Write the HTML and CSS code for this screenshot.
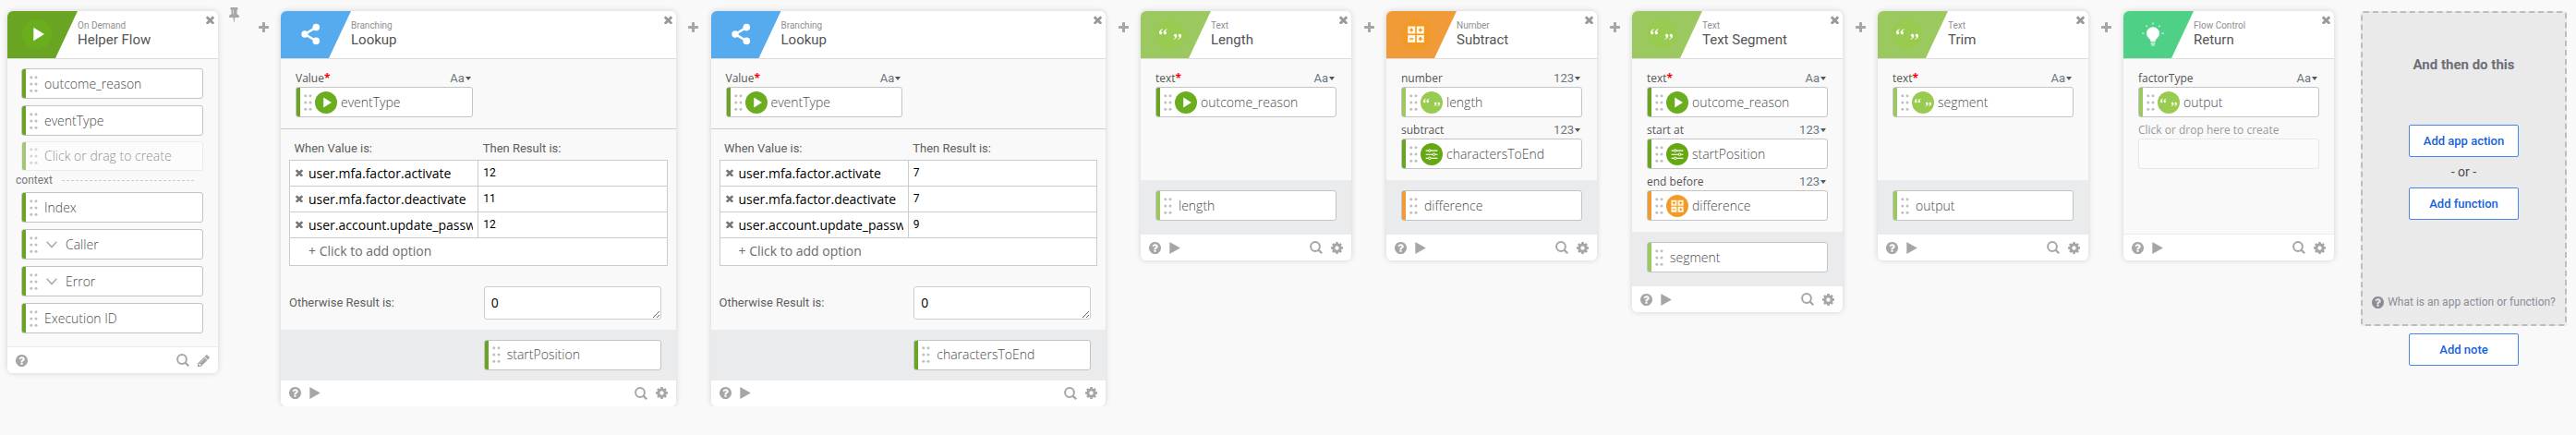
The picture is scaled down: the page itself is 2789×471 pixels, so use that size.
FILE: index.html
```html
<!DOCTYPE html>
<html lang="en">
<head>
<meta charset="utf-8">
<title>Helper Flow</title>
<link rel="stylesheet" href="styles.css">
</head>
<body>
<svg class="sprite" aria-hidden="true">
  <symbol id="i-close" viewBox="300 300 1192 1192"><path d="M1490 1322q0 40-28 68l-136 136q-28 28-68 28t-68-28l-294-294-294 294q-28 28-68 28t-68-28l-136-136q-28-28-28-68t28-68l294-294-294-294q-28-28-28-68t28-68l136-136q28-28 68-28t68 28l294 294 294-294q28-28 68-28t68 28l136 136q28 28 28 68t-28 68l-294 294 294 294q28 28 28 68z"/></symbol>
  <symbol id="i-plus" viewBox="192 128 1408 1408"><path d="M1600 736v192q0 40-28 68t-68 28h-416v416q0 40-28 68t-68 28h-192q-40 0-68-28t-28-68v-416h-416q-40 0-68-28t-28-68v-192q0-40 28-68t68-28h416v-416q0-40 28-68t68-28h192q40 0 68 28t28 68v416h416q40 0 68 28t28 68z"/></symbol>
  <symbol id="i-search" viewBox="0 0 14 14"><circle cx="6" cy="6" r="4.9" fill="none" stroke="currentColor" stroke-width="2"/><path d="M9.6 9.6 13.2 13.2" stroke="currentColor" stroke-width="2.2"/></symbol>
  <symbol id="i-help" viewBox="128 128 1536 1536"><path d="M1024 1376v-192q0-14-9-23t-23-9h-192q-14 0-23 9t-9 23v192q0 14 9 23t23 9h192q14 0 23-9t9-23zm256-672q0-88-55.500-163t-138.500-116-170-41q-243 0-371 213-15 24 8 42l132 100q7 6 19 6 16 0 25-12 53-68 86-92 34-24 86-24 48 0 85.500 26t37.500 59q0 38-20 61t-68 45q-63 28-115.500 86.500t-52.500 125.500v36q0 14 9 23t23 9h192q14 0 23-9t9-23q0-19 21.500-49.500t54.500-49.500q32-18 49-28.500t46-35 44.500-48 28-60.500 12.500-81zm384 192q0 209-103 385.500t-279.500 279.500-385.500 103-385.500-103-279.500-279.500-103-385.500 103-385.500 279.500-279.500 385.500-103 385.500 103 279.500 279.500 103 385.500z"/></symbol>
  <symbol id="i-gear" viewBox="128 128 1536 1536"><path d="M1152 896q0-106-75-181t-181-75-181 75-75 181 75 181 181 75 181-75 75-181zm512-109v222q0 12-8 23t-20 13l-185 28q-19 54-39 91 35 50 107 138 10 12 10 25t-9 23q-27 37-99 108t-94 71q-12 0-26-9l-138-108q-44 23-91 38-16 136-29 186-7 28-36 28h-222q-14 0-24.500-8.500t-11.500-21.500l-28-184q-49-16-90-37l-141 107q-10 9-25 9-14 0-25-11-126-114-165-168-7-10-7-23 0-12 8-23 15-21 51-66.500t54-70.500q-27-50-41-99l-183-27q-13-2-21-12.500t-8-23.500v-222q0-12 8-23t19-13l186-28q14-46 39-92-40-57-107-138-10-12-10-24 0-10 9-23 26-36 98.500-107.500t94.500-71.500q13 0 26 10l138 107q44-23 91-38 16-136 29-186 7-28 36-28h222q14 0 24.500 8.500t11.500 21.500l28 184q49 16 90 37l142-107q9-9 24-9 13 0 25 10 129 119 165 170 7 8 7 22 0 12-8 23-15 21-51 66.500t-54 70.500q26 50 41 98l183 28q13 2 21 12.500t8 23.500z"/></symbol>
  <symbol id="i-pencil" viewBox="128 128 1536 1536"><path d="M491 1536l91-91-235-235-91 91v107h128v128h107zm523-928q0-22-22-22-10 0-17 7l-542 542q-7 7-7 17 0 22 22 22 10 0 17-7l542-542q7-7 7-17zm-54-192l416 416-832 832h-416v-416zm683 96q0 53-37 90l-166 166-416-416 166-165q36-38 90-38 53 0 91 38l235 234q37 39 37 91z"/></symbol>
  <symbol id="i-pin" viewBox="320 128 1152 1664"><path d="M800 864v-448q0-14-9-23t-23-9-23 9-9 23v448q0 14 9 23t23 9 23-9 9-23zm672 352q0 26-19 45t-45 19h-429l-51 483q-2 12-10.500 20.500t-20.500 8.500h-1q-27 0-32-27l-76-485h-404q-26 0-45-19t-19-45q0-123 78.500-221.500t177.500-98.500v-512q-52 0-90-38t-38-90 38-90 90-38h640q52 0 90 38t38 90-38 90-90 38v512q99 0 177.500 98.500t78.500 221.500z"/></symbol>
  <symbol id="i-run" viewBox="0 0 12 13"><path d="M.3 0 11.800 6.500.3 13z"/></symbol>
  <symbol id="i-chevron" viewBox="0 0 12 8"><path d="M.7.8 6 6.600 11.300.8" fill="none" stroke="currentColor" stroke-width="1.500"/></symbol>
  <symbol id="i-caret" viewBox="0 0 6 4"><path d="M0 0h6L3 4z"/></symbol>
  <symbol id="i-grip" viewBox="0 0 9 18"><circle cx="1.800" cy="1.800" r="1.500"/><circle cx="7" cy="1.800" r="1.500"/><circle cx="1.800" cy="9" r="1.500"/><circle cx="7" cy="9" r="1.500"/><circle cx="1.800" cy="16.300" r="1.500"/><circle cx="7" cy="16.300" r="1.500"/></symbol>
  <symbol id="i-play" viewBox="0 0 32 32"><circle cx="16" cy="16" r="16" fill="#6aad1e"/><path d="M12.300 8.800 24 16 12.300 23.200z" fill="#fff"/></symbol>
  <symbol id="i-quotes" viewBox="0 0 32 32"><circle cx="16" cy="16" r="16" fill="#99cb51"/><g fill="#fff"><path id="q1" d="M7.600 10.200C5.200 11 4 12.500 4 14.200c0 1.200.7 2 1.700 2 .9 0 1.600-.6 1.600-1.500S6.700 13.200 5.800 13.100c.2-.9.900-1.600 2-2.200z"/><use href="#q1" x="4.700"/><use href="#q1" transform="rotate(180 16 16)"/><use href="#q1" transform="rotate(180 16 16)" x="4.700"/></g></symbol>
  <symbol id="i-calc" viewBox="0 0 32 32"><circle cx="16" cy="16" r="16" fill="#f39a26"/><g fill="#fff6e4"><path d="M7.200 7.500h8v8h-8zM16.800 7.500h8v8h-8zM7.200 17h8v8h-8zM16.800 17h8v8h-8z"/></g><path d="M11.200 9.500v4M9.200 11.500h4M20.800 9.500v4M18.800 11.500h4M9.200 21h4M20.800 19v4M18.800 21h4" stroke="#f39a26" stroke-width="1.600"/></symbol>
  <symbol id="i-sliders" viewBox="0 0 32 32"><circle cx="16" cy="16" r="16" fill="#65a812"/><path d="M7.500 10.800h17M7.500 16.300h17M7.500 21.800h17" stroke="#fff" stroke-width="1.500"/><g fill="#65a812" stroke="#fff" stroke-width="1.300"><circle cx="13" cy="10.800" r="1.700"/><circle cx="19.300" cy="16.300" r="1.700"/><circle cx="13" cy="21.800" r="1.700"/></g></symbol>
  <symbol id="i-share" viewBox="0 0 32 32"><g fill="#fff"><circle cx="10" cy="16" r="3.700"/><circle cx="22.300" cy="8.600" r="3.800"/><circle cx="22.300" cy="23.400" r="3.800"/></g><path d="M22.300 8.600 10 16l12.300 7.400" fill="none" stroke="#fff" stroke-width="2.400"/></symbol>
  <symbol id="i-bulb" viewBox="0 0 32 32"><path d="M16 8.200a7 7 0 0 0-7 7c0 2.600 1.500 4.100 3 5.500.9.900 1.400 1.900 1.400 3h5.200c0-1.100.5-2.100 1.400-3 1.500-1.400 3-2.900 3-5.500a7 7 0 0 0-7-7z" fill="#fff"/><path d="M13.600 24.900h4.800M13.600 26.600h4.800" stroke="#d8f5e4" stroke-width="1"/><path d="M14.300 28h3.400" stroke="#fff" stroke-width="1"/><path d="M16 3.300v2.400M8.300 6.500l1.700 1.800M23.700 6.500 22 8.300M4 15.200h2.600M25.400 15.200H28" stroke="#c6f1d8" stroke-width="1.300"/></symbol>
</svg>

<main class="flow">

  <article class="card">
    <header class="card-head">
      <div class="flag flag-green"><svg class="flag-icon"><use href="#i-play"/></svg></div>
      <div class="titles"><p class="kind">On Demand</p><h2 class="name">Helper Flow</h2></div>
      <button class="icon-btn close" aria-label="Remove Helper Flow"><svg class="ico-close"><use href="#i-close"/></svg></button>
    </header>
    <div class="body trigger">
      <div class="chip green"><svg class="grip"><use href="#i-grip"/></svg><span>outcome_reason</span></div>
      <div class="chip green"><svg class="grip"><use href="#i-grip"/></svg><span>eventType</span></div>
      <div class="chip green ghost"><svg class="grip"><use href="#i-grip"/></svg><span>Click or drag to create</span></div>
      <div class="divider-label"><span>context</span><i class="dashes"></i></div>
      <div class="chip green"><svg class="grip"><use href="#i-grip"/></svg><span>Index</span></div>
      <div class="chip green"><svg class="grip"><use href="#i-grip"/></svg><svg class="chevron"><use href="#i-chevron"/></svg><span>Caller</span></div>
      <div class="chip green"><svg class="grip"><use href="#i-grip"/></svg><svg class="chevron"><use href="#i-chevron"/></svg><span>Error</span></div>
      <div class="chip green"><svg class="grip"><use href="#i-grip"/></svg><span>Execution ID</span></div>
    </div>
    <footer class="card-foot">
      <button class="icon-btn" aria-label="Help"><svg class="ico"><use href="#i-help"/></svg></button>
      <button class="icon-btn push" aria-label="Search"><svg class="ico ico-search"><use href="#i-search"/></svg></button>
      <button class="icon-btn" aria-label="Edit"><svg class="ico"><use href="#i-pencil"/></svg></button>
    </footer>
  </article>

  <div class="joint joint-pin">
    <button class="icon-btn" aria-label="Pin"><svg class="ico-pin"><use href="#i-pin"/></svg></button>
    <button class="icon-btn add" aria-label="Add step"><svg class="ico-plus"><use href="#i-plus"/></svg></button>
  </div>

  <article class="card wide">
    <header class="card-head">
      <div class="flag flag-blue"><svg class="flag-icon"><use href="#i-share"/></svg></div>
      <div class="titles"><p class="kind">Branching</p><h2 class="name">Lookup</h2></div>
      <button class="icon-btn close" aria-label="Remove Lookup"><svg class="ico-close"><use href="#i-close"/></svg></button>
    </header>
    <div class="body lookup-in">
      <div class="field half">
        <div class="field-top"><span class="label">Value<b class="req">*</b></span><button class="type">Aa<svg class="caret"><use href="#i-caret"/></svg></button></div>
        <div class="chip green"><svg class="grip"><use href="#i-grip"/></svg><svg class="badge"><use href="#i-play"/></svg><span>eventType</span></div>
      </div>
    </div>
    <div class="lookup">
      <table class="cases">
        <thead><tr><th scope="col">When Value is:</th><th scope="col">Then Result is:</th></tr></thead>
        <tbody>
          <tr><td><div class="case"><button class="icon-btn" aria-label="Remove option"><svg class="ico-x"><use href="#i-close"/></svg></button><input class="when" aria-label="Value 1" value="user.mfa.factor.activate"></div></td><td><input class="then" aria-label="Result 1" value="12"></td></tr>
          <tr><td><div class="case"><button class="icon-btn" aria-label="Remove option"><svg class="ico-x"><use href="#i-close"/></svg></button><input class="when" aria-label="Value 2" value="user.mfa.factor.deactivate"></div></td><td><input class="then" aria-label="Result 2" value="11"></td></tr>
          <tr><td><div class="case"><button class="icon-btn" aria-label="Remove option"><svg class="ico-x"><use href="#i-close"/></svg></button><input class="when" aria-label="Value 3" value="user.account.update_password"></div></td><td><input class="then" aria-label="Result 3" value="12"></td></tr>
          <tr><td class="add-cell" colspan="2"><button class="add-option">+ Click to add option</button></td></tr>
        </tbody>
      </table>
      <div class="otherwise"><label for="else-1">Otherwise Result is:</label><textarea id="else-1">0</textarea></div>
    </div>
    <div class="out out-half">
      <div class="chip green"><svg class="grip"><use href="#i-grip"/></svg><span>startPosition</span></div>
    </div>
    <footer class="card-foot">
      <button class="icon-btn" aria-label="Help"><svg class="ico"><use href="#i-help"/></svg></button>
      <button class="icon-btn" aria-label="Run"><svg class="ico ico-run"><use href="#i-run"/></svg></button>
      <button class="icon-btn push" aria-label="Search"><svg class="ico ico-search"><use href="#i-search"/></svg></button>
      <button class="icon-btn" aria-label="Settings"><svg class="ico"><use href="#i-gear"/></svg></button>
    </footer>
  </article>

  <div class="joint"><button class="icon-btn add" aria-label="Add step"><svg class="ico-plus"><use href="#i-plus"/></svg></button></div>

  <article class="card wide">
    <header class="card-head">
      <div class="flag flag-blue"><svg class="flag-icon"><use href="#i-share"/></svg></div>
      <div class="titles"><p class="kind">Branching</p><h2 class="name">Lookup</h2></div>
      <button class="icon-btn close" aria-label="Remove Lookup"><svg class="ico-close"><use href="#i-close"/></svg></button>
    </header>
    <div class="body lookup-in">
      <div class="field half">
        <div class="field-top"><span class="label">Value<b class="req">*</b></span><button class="type">Aa<svg class="caret"><use href="#i-caret"/></svg></button></div>
        <div class="chip green"><svg class="grip"><use href="#i-grip"/></svg><svg class="badge"><use href="#i-play"/></svg><span>eventType</span></div>
      </div>
    </div>
    <div class="lookup">
      <table class="cases">
        <thead><tr><th scope="col">When Value is:</th><th scope="col">Then Result is:</th></tr></thead>
        <tbody>
          <tr><td><div class="case"><button class="icon-btn" aria-label="Remove option"><svg class="ico-x"><use href="#i-close"/></svg></button><input class="when" aria-label="Value 1" value="user.mfa.factor.activate"></div></td><td><input class="then" aria-label="Result 1" value="7"></td></tr>
          <tr><td><div class="case"><button class="icon-btn" aria-label="Remove option"><svg class="ico-x"><use href="#i-close"/></svg></button><input class="when" aria-label="Value 2" value="user.mfa.factor.deactivate"></div></td><td><input class="then" aria-label="Result 2" value="7"></td></tr>
          <tr><td><div class="case"><button class="icon-btn" aria-label="Remove option"><svg class="ico-x"><use href="#i-close"/></svg></button><input class="when" aria-label="Value 3" value="user.account.update_password"></div></td><td><input class="then" aria-label="Result 3" value="9"></td></tr>
          <tr><td class="add-cell" colspan="2"><button class="add-option">+ Click to add option</button></td></tr>
        </tbody>
      </table>
      <div class="otherwise"><label for="else-2">Otherwise Result is:</label><textarea id="else-2">0</textarea></div>
    </div>
    <div class="out out-half">
      <div class="chip green"><svg class="grip"><use href="#i-grip"/></svg><span>charactersToEnd</span></div>
    </div>
    <footer class="card-foot">
      <button class="icon-btn" aria-label="Help"><svg class="ico"><use href="#i-help"/></svg></button>
      <button class="icon-btn" aria-label="Run"><svg class="ico ico-run"><use href="#i-run"/></svg></button>
      <button class="icon-btn push" aria-label="Search"><svg class="ico ico-search"><use href="#i-search"/></svg></button>
      <button class="icon-btn" aria-label="Settings"><svg class="ico"><use href="#i-gear"/></svg></button>
    </footer>
  </article>

  <div class="joint"><button class="icon-btn add" aria-label="Add step"><svg class="ico-plus"><use href="#i-plus"/></svg></button></div>

  <article class="card">
    <header class="card-head">
      <div class="flag flag-lime"><svg class="flag-icon"><use href="#i-quotes"/></svg></div>
      <div class="titles"><p class="kind">Text</p><h2 class="name">Length</h2></div>
      <button class="icon-btn close" aria-label="Remove Length"><svg class="ico-close"><use href="#i-close"/></svg></button>
    </header>
    <div class="body">
      <div class="field">
        <div class="field-top"><span class="label">text<b class="req">*</b></span><button class="type">Aa<svg class="caret"><use href="#i-caret"/></svg></button></div>
        <div class="chip green"><svg class="grip"><use href="#i-grip"/></svg><svg class="badge"><use href="#i-play"/></svg><span>outcome_reason</span></div>
      </div>
    </div>
    <div class="out"><div class="chip lime"><svg class="grip"><use href="#i-grip"/></svg><span>length</span></div></div>
    <footer class="card-foot">
      <button class="icon-btn" aria-label="Help"><svg class="ico"><use href="#i-help"/></svg></button>
      <button class="icon-btn" aria-label="Run"><svg class="ico ico-run"><use href="#i-run"/></svg></button>
      <button class="icon-btn push" aria-label="Search"><svg class="ico ico-search"><use href="#i-search"/></svg></button>
      <button class="icon-btn" aria-label="Settings"><svg class="ico"><use href="#i-gear"/></svg></button>
    </footer>
  </article>

  <div class="joint"><button class="icon-btn add" aria-label="Add step"><svg class="ico-plus"><use href="#i-plus"/></svg></button></div>

  <article class="card">
    <header class="card-head">
      <div class="flag flag-orange"><svg class="flag-icon"><use href="#i-calc"/></svg></div>
      <div class="titles"><p class="kind">Number</p><h2 class="name">Subtract</h2></div>
      <button class="icon-btn close" aria-label="Remove Subtract"><svg class="ico-close"><use href="#i-close"/></svg></button>
    </header>
    <div class="body">
      <div class="field">
        <div class="field-top"><span class="label">number</span><button class="type">123<svg class="caret"><use href="#i-caret"/></svg></button></div>
        <div class="chip lime"><svg class="grip"><use href="#i-grip"/></svg><svg class="badge"><use href="#i-quotes"/></svg><span>length</span></div>
      </div>
      <div class="field">
        <div class="field-top"><span class="label">subtract</span><button class="type">123<svg class="caret"><use href="#i-caret"/></svg></button></div>
        <div class="chip green"><svg class="grip"><use href="#i-grip"/></svg><svg class="badge"><use href="#i-sliders"/></svg><span>charactersToEnd</span></div>
      </div>
    </div>
    <div class="out"><div class="chip orange"><svg class="grip"><use href="#i-grip"/></svg><span>difference</span></div></div>
    <footer class="card-foot">
      <button class="icon-btn" aria-label="Help"><svg class="ico"><use href="#i-help"/></svg></button>
      <button class="icon-btn" aria-label="Run"><svg class="ico ico-run"><use href="#i-run"/></svg></button>
      <button class="icon-btn push" aria-label="Search"><svg class="ico ico-search"><use href="#i-search"/></svg></button>
      <button class="icon-btn" aria-label="Settings"><svg class="ico"><use href="#i-gear"/></svg></button>
    </footer>
  </article>

  <div class="joint"><button class="icon-btn add" aria-label="Add step"><svg class="ico-plus"><use href="#i-plus"/></svg></button></div>

  <article class="card">
    <header class="card-head">
      <div class="flag flag-lime"><svg class="flag-icon"><use href="#i-quotes"/></svg></div>
      <div class="titles"><p class="kind">Text</p><h2 class="name">Text Segment</h2></div>
      <button class="icon-btn close" aria-label="Remove Text Segment"><svg class="ico-close"><use href="#i-close"/></svg></button>
    </header>
    <div class="body">
      <div class="field">
        <div class="field-top"><span class="label">text<b class="req">*</b></span><button class="type">Aa<svg class="caret"><use href="#i-caret"/></svg></button></div>
        <div class="chip green"><svg class="grip"><use href="#i-grip"/></svg><svg class="badge"><use href="#i-play"/></svg><span>outcome_reason</span></div>
      </div>
      <div class="field">
        <div class="field-top"><span class="label">start at</span><button class="type">123<svg class="caret"><use href="#i-caret"/></svg></button></div>
        <div class="chip green"><svg class="grip"><use href="#i-grip"/></svg><svg class="badge"><use href="#i-sliders"/></svg><span>startPosition</span></div>
      </div>
      <div class="field">
        <div class="field-top"><span class="label">end before</span><button class="type">123<svg class="caret"><use href="#i-caret"/></svg></button></div>
        <div class="chip orange"><svg class="grip"><use href="#i-grip"/></svg><svg class="badge"><use href="#i-calc"/></svg><span>difference</span></div>
      </div>
    </div>
    <div class="out"><div class="chip lime"><svg class="grip"><use href="#i-grip"/></svg><span>segment</span></div></div>
    <footer class="card-foot">
      <button class="icon-btn" aria-label="Help"><svg class="ico"><use href="#i-help"/></svg></button>
      <button class="icon-btn" aria-label="Run"><svg class="ico ico-run"><use href="#i-run"/></svg></button>
      <button class="icon-btn push" aria-label="Search"><svg class="ico ico-search"><use href="#i-search"/></svg></button>
      <button class="icon-btn" aria-label="Settings"><svg class="ico"><use href="#i-gear"/></svg></button>
    </footer>
  </article>

  <div class="joint"><button class="icon-btn add" aria-label="Add step"><svg class="ico-plus"><use href="#i-plus"/></svg></button></div>

  <article class="card">
    <header class="card-head">
      <div class="flag flag-lime"><svg class="flag-icon"><use href="#i-quotes"/></svg></div>
      <div class="titles"><p class="kind">Text</p><h2 class="name">Trim</h2></div>
      <button class="icon-btn close" aria-label="Remove Trim"><svg class="ico-close"><use href="#i-close"/></svg></button>
    </header>
    <div class="body">
      <div class="field">
        <div class="field-top"><span class="label">text<b class="req">*</b></span><button class="type">Aa<svg class="caret"><use href="#i-caret"/></svg></button></div>
        <div class="chip lime"><svg class="grip"><use href="#i-grip"/></svg><svg class="badge"><use href="#i-quotes"/></svg><span>segment</span></div>
      </div>
    </div>
    <div class="out"><div class="chip lime"><svg class="grip"><use href="#i-grip"/></svg><span>output</span></div></div>
    <footer class="card-foot">
      <button class="icon-btn" aria-label="Help"><svg class="ico"><use href="#i-help"/></svg></button>
      <button class="icon-btn" aria-label="Run"><svg class="ico ico-run"><use href="#i-run"/></svg></button>
      <button class="icon-btn push" aria-label="Search"><svg class="ico ico-search"><use href="#i-search"/></svg></button>
      <button class="icon-btn" aria-label="Settings"><svg class="ico"><use href="#i-gear"/></svg></button>
    </footer>
  </article>

  <div class="joint"><button class="icon-btn add" aria-label="Add step"><svg class="ico-plus"><use href="#i-plus"/></svg></button></div>

  <article class="card">
    <header class="card-head">
      <div class="flag flag-mint"><svg class="flag-icon"><use href="#i-bulb"/></svg></div>
      <div class="titles"><p class="kind">Flow Control</p><h2 class="name">Return</h2></div>
      <button class="icon-btn close" aria-label="Remove Return"><svg class="ico-close"><use href="#i-close"/></svg></button>
    </header>
    <div class="body body-tall">
      <div class="field">
        <div class="field-top"><span class="label">factorType</span><button class="type">Aa<svg class="caret"><use href="#i-caret"/></svg></button></div>
        <div class="chip lime"><svg class="grip"><use href="#i-grip"/></svg><svg class="badge"><use href="#i-quotes"/></svg><span>output</span></div>
      </div>
      <div class="field">
        <div class="field-top"><label class="label hint" for="new-key">Click or drop here to create</label></div>
        <input class="slot" id="new-key">
      </div>
    </div>
    <footer class="card-foot">
      <button class="icon-btn" aria-label="Help"><svg class="ico"><use href="#i-help"/></svg></button>
      <button class="icon-btn" aria-label="Run"><svg class="ico ico-run"><use href="#i-run"/></svg></button>
      <button class="icon-btn push" aria-label="Search"><svg class="ico ico-search"><use href="#i-search"/></svg></button>
      <button class="icon-btn" aria-label="Settings"><svg class="ico"><use href="#i-gear"/></svg></button>
    </footer>
  </article>

  <aside class="next">
    <section class="next-box">
      <h2 class="next-title">And then do this</h2>
      <button class="btn">Add app action</button>
      <p class="or">- or -</p>
      <button class="btn">Add function</button>
      <a class="what" href="#"><svg class="ico"><use href="#i-help"/></svg>What is an app action or function?</a>
    </section>
    <button class="btn">Add note</button>
  </aside>

</main>
</body>
</html>
```

FILE: styles.css
```css
* { box-sizing: border-box; }

body {
  margin: 0;
  background: #f9f9f9;
  color: #4c4c4c;
  font: 14px/18px "Open Sans", "Noto Sans", sans-serif;
}

h2, p { margin: 0; }
button, input, textarea { font: inherit; color: inherit; }
svg { display: block; flex: none; fill: currentColor; }
.sprite { position: absolute; width: 0; height: 0; }

.flow {
  display: flex;
  align-items: flex-start;
  padding: 12px 10px 0 8px;
}

/* Cards */
.card {
  flex: 456 1 0;
  min-width: 0;
  border-radius: 6px;
  background: #f9f9f9;
  box-shadow: 0 0 6px rgba(0, 0, 0, .16);
  overflow: hidden;
}
.wide { flex-grow: 855; }

.card-head {
  display: flex;
  height: 52px;
  background: #fff;
  border-bottom: 1px solid #dcdcdc;
}
.flag {
  flex: none;
  width: 76px;
  padding: 9px 0 0 16px;
  clip-path: polygon(0 0, 100% 0, 52px 100%, 0 100%);
}
.flag-green { background: #69a523; }
.flag-blue { background: #55abee; }
.flag-lime { background: #9cc95f; }
.flag-orange { background: #f09a38; }
.flag-mint { background: #4fd087; }
.flag-icon { width: 32px; height: 32px; }

.titles {
  flex: 1;
  min-width: 0;
  padding-top: 10px;
  font-family: Roboto, sans-serif;
  white-space: nowrap;
}
.kind { font-size: 10px; line-height: 12px; color: #8f8f8f; }
.name { font-size: 15px; line-height: 18px; font-weight: 400; color: #555; }

.icon-btn {
  display: block;
  flex: none;
  padding: 0;
  border: 0;
  background: none;
  color: #a6a6a6;
  cursor: pointer;
}
.close { align-self: flex-start; margin: 5px 4px 0 0; color: #999; }
.ico-close { width: 9px; height: 9px; }

/* Card body */
.body {
  display: flex;
  flex-direction: column;
  gap: 7px;
  min-height: 131px;
  padding: 14px 16px 12px;
}
.trigger { padding: 10px 16px 14px 15px; }
.body-tall { min-height: 189px; }
.lookup-in { min-height: 0; border-bottom: 1px solid #ccc; }
.half { width: 50%; padding-right: 6px; }

.field-top {
  display: flex;
  justify-content: space-between;
  height: 16px;
}
.label { font-size: 12px; line-height: 14px; color: #555; }
.hint { color: #999; }
.req { color: #f00; font-size: 12px; line-height: 14px; }
.type {
  display: flex;
  align-items: center;
  gap: 1px;
  height: 14px;
  padding: 0 2px 0 0;
  border: 0;
  background: none;
  font: 13px/14px Roboto, sans-serif;
  color: #6b7680;
}
.caret { width: 6px; height: 4px; color: #555; }

.chip {
  display: flex;
  align-items: center;
  height: 33px;
  padding-left: 4px;
  border: 1px solid #c4c4c4;
  border-radius: 3px;
  background: #fff;
  font-weight: 300;
  white-space: nowrap;
}
.green { background: linear-gradient(90deg, #69a523 4px, #fff 4px); }
.lime { background: linear-gradient(90deg, #9cc95f 4px, #fff 4px); }
.orange { background: linear-gradient(90deg, #f09a38 4px, #fff 4px); }
.ghost { height: 32px; margin: -1px 0 -3px; border-color: #e2e2e2; opacity: .6; }
.grip { width: 9px; height: 18px; margin: 0 7px 0 4px; color: #bfbfbf; }
.badge { width: 24px; height: 24px; margin: 0 4px 0 -4px; }
.chevron { width: 12px; height: 8px; margin: 0 9px 0 2px; color: #aaa; }

.divider-label {
  display: flex;
  align-items: center;
  gap: 10px;
  height: 12px;
  margin: 0 10px 0 -6px;
  font: 12px/12px Roboto, sans-serif;
  color: #777;
}
.dashes { flex: 1; border-top: 1px dashed #ccc; }

.slot {
  display: block;
  width: 100%;
  height: 33px;
  border: 1px solid #e8e8e8;
  border-radius: 3px;
  background: #fbfbfb;
}

.out { padding: 11px 16px 14px; background: #eaebec; }
.out-half { padding: 11px 16px 10px calc(50% + 6px); }

.card-foot {
  display: flex;
  align-items: center;
  gap: 9px;
  height: 29px;
  padding: 0 9px;
  border-top: 1px solid #ececec;
  background: #fff;
}
.push { margin-left: auto; }
.ico { width: 13px; height: 13px; }
.ico-run { width: 12px; }
.ico-search { width: 14px; height: 14px; }

/* Lookup table */
.lookup { padding: 9px 9px 11px; }
.cases {
  width: 100%;
  table-layout: fixed;
  border-collapse: collapse;
}
.cases th {
  height: 24px;
  padding: 0 5px;
  font: 13px/16px Roboto, sans-serif;
  text-align: left;
  color: #5e5e5e;
}
.cases td { height: 28px; padding: 0; border: 1px solid #ccc; background: #fff; }
.cases .add-cell { height: 30px; }
.case { display: flex; align-items: center; gap: 6px; padding: 0 5px 0 6px; }
.case .icon-btn { color: #777; }
.ico-x { width: 8px; height: 8px; }
.when, .then {
  display: block;
  width: 100%;
  min-width: 0;
  height: 26px;
  padding: 0;
  border: 0;
  background: none;
  color: #000;
}
.then { padding-left: 5px; font: 12px/16px Roboto, sans-serif; }
.add-option {
  display: block;
  padding: 0 0 0 20px;
  border: 0;
  background: none;
  color: #6b6b6b;
}

.otherwise {
  display: grid;
  grid-template-columns: 1fr 1fr;
  align-items: center;
  margin-top: 22px;
  font: 13px/16px Roboto, sans-serif;
  color: #5e5e5e;
}
.otherwise textarea {
  height: 36px;
  margin: 0 7px 0 6px;
  padding: 8px 7px;
  border: 1px solid #ccc;
  border-radius: 3px;
  background: #fff;
  font: 14px/18px "Open Sans", sans-serif;
  color: #000;
  overflow: hidden;
}

/* Gaps between cards */
.joint {
  flex: none;
  display: flex;
  align-items: flex-start;
  justify-content: center;
  width: 38px;
}
.joint-pin { width: 68px; justify-content: space-between; padding: 0 13px 0 12px; }
.joint-pin .icon-btn:first-child { margin-top: -4px; }
.add { margin-top: 12px; }
.ico-plus { width: 11px; height: 11px; }
.ico-pin { width: 11px; height: 16px; }

/* Next step */
.next {
  flex: 446 1 0;
  min-width: 0;
  margin-left: 29px;
  display: flex;
  flex-direction: column;
  align-items: center;
  gap: 8px;
  font-family: Roboto, sans-serif;
}
.next-box {
  align-self: stretch;
  display: flex;
  flex-direction: column;
  align-items: center;
  min-height: 341px;
  padding: 46px 0 16px;
  border: 2px dashed #bdbdbd;
  border-radius: 3px;
  background: #eaeaeb;
}
.next-title { margin-bottom: 55px; font-size: 15px; line-height: 20px; font-weight: 700; color: #6e6e78; }
.btn {
  width: 119px;
  height: 35px;
  padding: 0;
  border: 1px solid #4a85e8;
  border-radius: 2px;
  background: #fff;
  font: 500 13px/18px Roboto, sans-serif;
  color: #1662dd;
}
.or { padding: 7px 0 8px; font-size: 14px; }
.what {
  display: flex;
  align-items: center;
  gap: 4px;
  margin-top: auto;
  font-size: 12px;
  line-height: 16px;
  white-space: nowrap;
  color: #8c8c96;
  text-decoration: none;
}
```
